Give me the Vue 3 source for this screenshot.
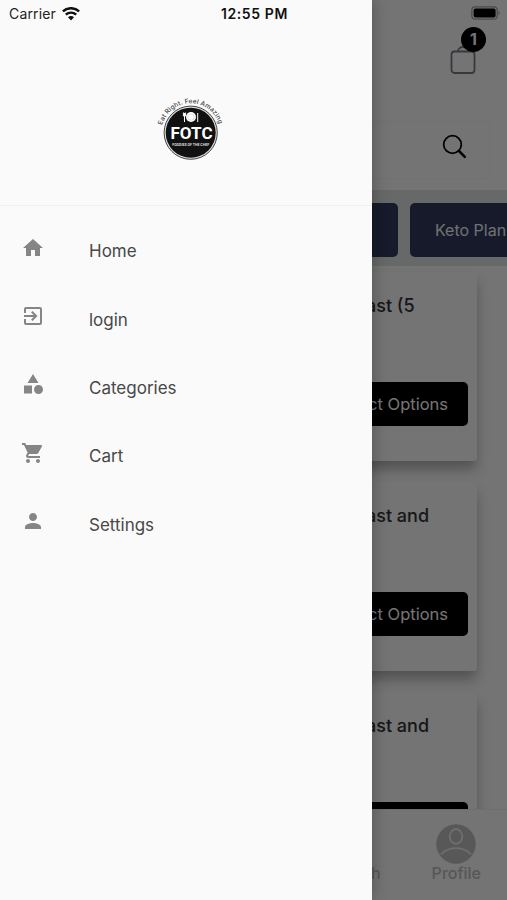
<script setup>
const menu = [
  { label: 'Home', d: 'M10 20v-6h4v6h5v-8h3L12 3 2 12h3v8z' },
  { label: 'login', d: 'M10.09 15.59L11.5 17l5-5-5-5-1.41 1.41L12.67 11H3v2h9.67l-2.58 2.59zM19 3H5c-1.11 0-2 .9-2 2v4h2V5h14v14H5v-4H3v4c0 1.1.89 2 2 2h14c1.1 0 2-.9 2-2V5c0-1.1-.9-2-2-2z' },
  { label: 'Categories', d: 'M12 2l-5.5 9h11zM17.5 13a4.5 4.5 0 1 0 0 9 4.5 4.5 0 0 0 0-9zM3 13.5h8v8H3z' },
  { label: 'Cart', d: 'M7 18c-1.1 0-1.99.9-1.99 2S5.9 22 7 22s2-.9 2-2-.9-2-2-2zM1 2v2h2l3.6 7.59-1.35 2.45c-.16.28-.25.61-.25.96 0 1.1.9 2 2 2h12v-2H7.42c-.14 0-.25-.11-.25-.25l.03-.12.9-1.63h7.45c.75 0 1.41-.41 1.75-1.03l3.58-6.49c.08-.14.12-.31.12-.48 0-.55-.45-1-1-1H5.21l-.94-2H1zm16 16c-1.1 0-1.99.9-1.99 2s.89 2 1.99 2 2-.9 2-2-.9-2-2-2z' },
  { label: 'Settings', d: 'M12 12c2.21 0 4-1.79 4-4s-1.79-4-4-4-4 1.79-4 4 1.79 4 4 4zm0 2c-2.67 0-8 1.34-8 4v2h16v-2c0-2.66-5.33-4-8-4z' },
]
const meals = ['Breakfast (5', 'Breakfast and', 'Breakfast and']
</script>

<template>
  <div class="screen">
    <div class="page">
      <header class="top">
        <svg class="battery" width="30" height="14" viewBox="0 0 30 14">
          <rect x=".8" y=".8" width="25.4" height="12.4" rx="3.5" fill="none" stroke="#a0a0a0" stroke-width="1.2" />
          <rect x="2.6" y="2.4" width="22" height="9.2" rx="2" fill="#000" />
          <path d="M27.6 4.6q2 2.4 0 4.8z" fill="#999" />
        </svg>
        <div class="bag">
          <svg width="26" height="32" viewBox="0 0 26 32" fill="none" stroke="#747d84" stroke-width="1.8">
            <rect x="1.5" y="7.5" width="23" height="21.5" rx="3" />
            <path d="M8 7.5c0-6 10-6 10 0" />
          </svg>
          <span class="badge">1</span>
        </div>
      </header>
      <div class="search">
        <svg width="26" height="26" viewBox="0 0 26 26" fill="none" stroke="#000" stroke-linecap="round">
          <circle cx="10.5" cy="10.5" r="8.8" stroke-width="1.8" />
          <path d="M17 17l5.8 5.8" stroke-width="2.5" />
        </svg>
      </div>
      <nav class="plans">
        <span class="plan"></span>
        <span class="plan">Keto Plan</span>
      </nav>
      <main class="list">
        <article v-for="(m, i) in meals" :key="i" class="card">
          <h2>{{ m }}</h2>
          <button v-if="i < 2">Select Options</button>
          <button v-else aria-label="Select Options"></button>
        </article>
      </main>
      <footer class="tabs">
        <span class="tab search-tab">Search</span>
        <div class="tab">
          <svg width="40" height="40" viewBox="0 0 40 40">
            <circle cx="20" cy="20" r="19.7" fill="#c0c0c0" />
            <ellipse cx="20" cy="12.5" rx="6.3" ry="7.3" fill="none" stroke="#f0f0f0" stroke-width="1.8" />
            <path d="M4.8 30.5C13 22 27 22 35.2 30.5" fill="none" stroke="#f0f0f0" stroke-width="1.8" />
          </svg>
          <span>Profile</span>
        </div>
      </footer>
    </div>
    <div class="scrim"></div>
    <aside class="drawer">
      <div class="status">
        <span>Carrier</span>
        <svg width="18" height="14" viewBox="0 0 18 14" fill="none" stroke="#111" stroke-width="2.4">
          <path d="M.9 4.4C5.3.1 12.7.1 17.1 4.4" />
          <path d="M3.8 7.6c2.9-2.7 7.5-2.7 10.4 0" />
          <path d="M6 10.3c1.8-1.6 4.2-1.6 6 0L9 13.5z" fill="#111" stroke="none" />
        </svg>
        <strong>12:55 PM</strong>
      </div>
      <div class="brand">
        <svg width="72" height="68" viewBox="0 0 72 68">
          <defs><path id="motto" d="M8.2 31.1A29.5 29.5 0 0 1 65.2 31.1" /></defs>
          <circle cx="36.7" cy="38.7" r="26.6" fill="#ddd" stroke="#444" stroke-width="1" />
          <circle cx="36.7" cy="38.7" r="25" fill="#111" />
          <text class="motto"><textPath href="#motto" textLength="76">Eat Right. Feel Amazing</textPath></text>
          <circle cx="37" cy="23" r="5" fill="#fff" />
          <circle cx="37" cy="23" r="3.2" fill="none" stroke="#bbb" stroke-width=".5" />
          <path d="M30.5 19v9M29.4 18.5v3.5h2.2v-3.5M43.7 19v9" fill="none" stroke="#fff" stroke-width="1" />
          <text class="mark" x="16.5" y="44.8" textLength="42">FOTC</text>
          <text class="tag" x="18.2" y="51.8" textLength="37">FOODIES OF THE CHEF</text>
        </svg>
      </div>
      <ul class="menu">
        <li v-for="item in menu" :key="item.label">
          <svg width="24" height="24" viewBox="0 0 24 24"><path :d="item.d" /></svg>
          <span>{{ item.label }}</span>
        </li>
      </ul>
    </aside>
  </div>
</template>

<style>
body { margin: 0; }
</style>

<style scoped>
.screen {
  position: relative;
  width: 507px;
  height: 900px;
  overflow: hidden;
  font-family: Inter, "Liberation Sans", sans-serif;
}
.page {
  display: flex;
  flex-direction: column;
  height: 900px;
  background: #fcfcfc;
}
.top {
  display: flex;
  flex-direction: column;
  align-items: flex-end;
  height: 121px;
  box-sizing: border-box;
  padding: 6px 6px 0 0;
}
.bag {
  position: relative;
  height: 32px;
  margin: 24px 25px 0 0;
}
.badge {
  position: absolute;
  left: 11px;
  top: -17px;
  width: 25px;
  height: 25px;
  border-radius: 50%;
  background: #000;
  color: #fff;
  font-size: 16px;
  font-weight: 700;
  line-height: 25px;
  text-align: center;
}
.search {
  display: flex;
  align-items: center;
  justify-content: flex-end;
  height: 58px;
  box-sizing: border-box;
  margin: 0 17px 11px;
  padding: 0 21px 6px 0;
  border: 1px solid #f7f7f7;
  border-radius: 3px;
}
.plans {
  display: flex;
  flex: none;
  gap: 12px;
  height: 76px;
  box-sizing: border-box;
  padding: 13px 0 9px 240px;
  background: #e1e4e3;
  overflow: hidden;
}
.plan {
  flex: none;
  width: 158px;
  border-radius: 5px;
  background: #30395f;
  box-sizing: border-box;
  padding-left: 25px;
  color: #f4f4f6;
  font-size: 16px;
  line-height: 54px;
}
.list {
  display: flex;
  flex: 1;
  flex-direction: column;
  gap: 21px;
  min-height: 0;
  box-sizing: border-box;
  padding: 6px 30px 0;
  overflow: hidden;
}
.card {
  display: flex;
  flex: none;
  flex-direction: column;
  align-items: flex-end;
  justify-content: space-between;
  height: 189px;
  box-sizing: border-box;
  padding: 21px 9px 35px;
  border-radius: 3px;
  background: #fcfcfc;
  box-shadow: 0 9px 13px -1px rgba(0, 0, 0, .3);
}
.card h2 {
  width: 158px;
  margin: 0;
  color: #333;
  font-size: 18px;
  font-weight: 500;
  line-height: 25px;
}
.card button {
  width: 152px;
  height: 44px;
  padding: 1px 20px 0 0;
  border: 0;
  border-radius: 5px;
  background: #000;
  color: #fff;
  font: 400 16.5px/43px Inter, sans-serif;
  text-align: right;
}
.tabs {
  display: flex;
  flex: none;
  align-items: flex-end;
  justify-content: flex-end;
  gap: 51px;
  height: 91px;
  box-sizing: border-box;
  padding: 0 26px 17px;
  border-top: 1px solid #f0f0f0;
  background: #fcfcfc;
}
.tab {
  display: flex;
  flex-direction: column;
  align-items: center;
  color: #bdbdbd;
  font-size: 16px;
  font-weight: 500;
  line-height: 20px;
}
.tab svg { margin-bottom: -1px; }
.scrim {
  position: absolute;
  inset: 0;
  background: rgba(0, 0, 0, .54);
}
.drawer {
  position: absolute;
  inset: 0 auto 0 0;
  width: 372.4px;
  background: #fafafa;
  box-shadow: 0 0 16px rgba(0, 0, 0, .3);
}
.status {
  display: flex;
  align-items: center;
  height: 27px;
  padding-left: 9px;
  color: #222;
  font-size: 14px;
  letter-spacing: .15px;
}
.status svg { margin-left: 6px; }
.status strong {
  margin-left: 141px;
  color: #111;
  font-weight: 600;
  letter-spacing: .6px;
}
.brand {
  height: 179px;
  box-sizing: border-box;
  padding: 67px 0 0 154px;
  border-bottom: 1px solid #f0f0f0;
}
.motto { font: 500 6.5px Inter, sans-serif; fill: #444; }
.mark { font: 700 17px Roboto, sans-serif; fill: #fff; }
.tag { font: 700 3.6px Roboto, sans-serif; fill: #ddd; }
.menu {
  margin: 0;
  padding: 11px 0 0 21px;
  list-style: none;
}
.menu li {
  display: flex;
  align-items: center;
  gap: 44px;
  height: 68.4px;
  color: #484848;
  font-size: 17px;
}
.menu svg {
  margin-bottom: 7px;
  fill: #858585;
}
</style>
